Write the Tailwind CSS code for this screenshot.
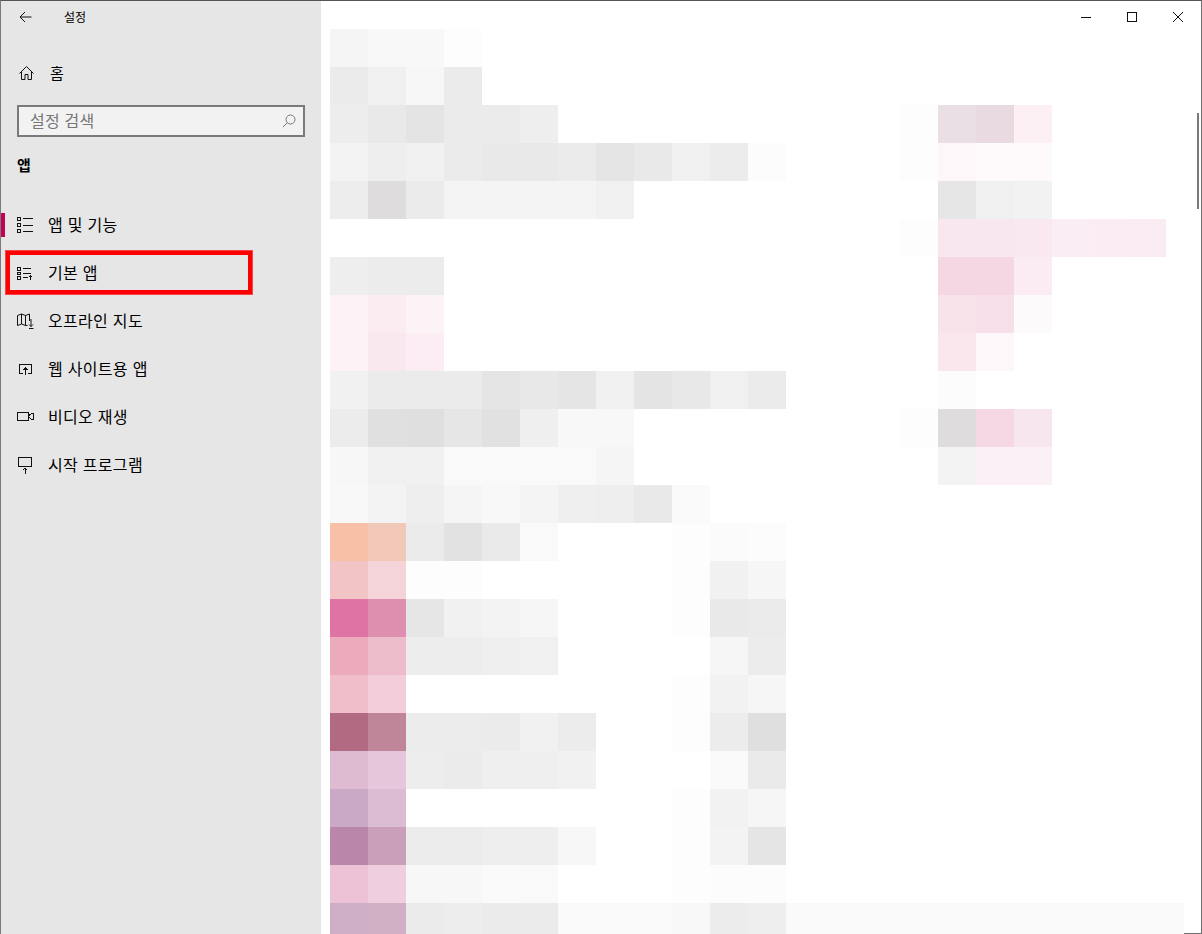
<!DOCTYPE html>
<html lang="ko">
<head>
<meta charset="utf-8">
<title>설정</title>
<script src="https://cdn.jsdelivr.net/npm/@tailwindcss/browser@4"></script>
</head>
<body class="bg-white">
<div class="relative w-[1202px] h-[934px] overflow-hidden flex border-t border-t-[#555555] border-l border-l-[#7a7a7a] border-r border-r-[#707070] font-['Noto_Sans_CJK_KR','Noto_Sans',sans-serif] text-black">

  <aside class="w-[320px] shrink-0 bg-[#e6e6e6] flex flex-col">
    <div class="h-[32px] flex items-center">
      <div class="w-[63px] pl-[18px] flex">
        <svg width="13" height="12" viewBox="0 0 13 12" fill="none" stroke="#111" stroke-width="1"><path d="M12.5 6H1M6 1L1 6l5 5"/></svg>
      </div>
      <span class="text-[12px] leading-none">설정</span>
    </div>
    <div class="h-[48px] mt-[16px] flex items-center">
      <div class="w-[49px] pl-[18px] flex">
        <svg width="15" height="16" viewBox="0 0 15 16" fill="none" stroke="#111" stroke-width="1"><path d="M.5 8.5l7-7 7 7M2.5 7v7.5h3.5V9.5h3v5h3.5V7"/></svg>
      </div>
      <span class="text-[15px] leading-none pb-[2px]">홈</span>
    </div>
    <div class="mt-[8px] mx-[16px] h-[32px] border-2 border-[#7a7a7a] bg-[#f2f2f2] flex items-center justify-between pl-[11px] pr-[7px]">
      <span class="text-[16px] tracking-[0.2px] leading-none text-[#767676] pb-[2px]">설정 검색</span>
      <svg width="14" height="14" viewBox="0 0 14 14" fill="none" stroke="#767676" stroke-width="1"><circle cx="8.5" cy="5.5" r="4.5"/><path d="M5.2 8.8L1 13"/></svg>
    </div>
    <div class="h-[64px] pl-[16px] pt-[17px]">
      <h2 class="text-[15px] leading-[22px] font-bold">앱</h2>
    </div>
    <nav class="flex flex-col">
      <a class="relative h-[48px] flex items-center text-[16px] tracking-[0.3px] leading-none">
        <span class="absolute left-0 top-[12px] w-[4px] h-[24px] bg-[#c30052]"></span>
        <span class="w-[47px] pl-[16px] flex">
          <svg width="16" height="16" viewBox="0 0 16 16" fill="none" stroke="#111" stroke-width="1" shape-rendering="crispEdges"><path d="M.5.5h3v3h-3zM.5 6.5h3v3h-3zM.5 12.5h3v3h-3zM6 1.5h9.5M6 8h9.5M6 14.5h9.5"/></svg>
        </span>
        <span class="pb-[2px]">앱 및 기능</span>
      </a>
      <a class="h-[48px] flex items-center text-[16px] tracking-[0.3px] leading-none">
        <span class="w-[47px] pl-[16px] flex">
          <svg width="16" height="16" viewBox="0 0 16 16" fill="none" stroke="#111" stroke-width="1" shape-rendering="crispEdges"><path d="M.5 2.5h2.5v2.5H.5zM.5 7h2.5v2.5H.5zM.5 11.5h2.5v2.5H.5zM6 3.5h8M6 8h8M6 12.5h5M13.5 14.5V10M12 11.5h3"/></svg>
        </span>
        <span class="pb-[2px]">기본 앱</span>
      </a>
      <a class="h-[48px] flex items-center text-[16px] tracking-[0.3px] leading-none">
        <span class="w-[47px] pl-[16px] flex">
          <svg width="17" height="16" viewBox="0 0 17 16" fill="none" stroke="#111" stroke-width="1"><path d="M.5 2.5l4-1.5 4 1.5 4-1.5v7M.5 2.5v10l4-1.5 4 1.5h2M4.5 1v10M8.5 2.5v10M14 6v7.5M12 11.5l2 2 2-2M12 15.5h4.5"/></svg>
        </span>
        <span class="pb-[2px]">오프라인 지도</span>
      </a>
      <a class="h-[48px] flex items-center text-[16px] tracking-[0.3px] leading-none">
        <span class="w-[47px] pl-[16px] flex">
          <svg width="16" height="16" viewBox="0 0 16 16" fill="none" stroke="#111" stroke-width="1" shape-rendering="crispEdges"><path d="M6 12.5H2.5v-9h12v9H11M8.5 14V7M6.5 9l2-2 2 2"/></svg>
        </span>
        <span class="pb-[2px]">웹 사이트용 앱</span>
      </a>
      <a class="h-[48px] flex items-center text-[16px] tracking-[0.3px] leading-none">
        <span class="w-[47px] pl-[16px] flex">
          <svg width="17" height="16" viewBox="0 0 17 16" fill="none" stroke="#111" stroke-width="1" shape-rendering="crispEdges"><path d="M.5 3.5h11v8H.5zM11.5 7l3-2.5h1.5v6h-1.5l-3-2.5"/></svg>
        </span>
        <span class="pb-[2px]">비디오 재생</span>
      </a>
      <a class="h-[48px] flex items-center text-[16px] tracking-[0.3px] leading-none">
        <span class="w-[47px] pl-[16px] flex">
          <svg width="16" height="17" viewBox="0 0 16 17" fill="none" stroke="#111" stroke-width="1" shape-rendering="crispEdges"><path d="M1.5.5h13v9h-13zM8 16.5V11M6 13l2-2 2 2"/></svg>
        </span>
        <span class="pb-[2px]">시작 프로그램</span>
      </a>
    </nav>
  </aside>

  <main class="flex-1 bg-white pl-[9px] pt-[28px]">
    <div class="grid grid-cols-[repeat(22,38px)_18px] auto-rows-[38px]">
      <!-- row 0 -->
      <i class="bg-[#f5f5f5]"></i><i class="bg-[#f8f8f8]"></i><i class="bg-[#f8f8f8]"></i><i class="bg-[#fdfdfd]"></i>
      <!-- row 1 -->
      <i class="col-start-1 bg-[#ebebeb]"></i><i class="bg-[#f0f0f0]"></i><i class="bg-[#f7f7f7]"></i><i class="bg-[#ebebeb]"></i>
      <!-- row 2 -->
      <i class="col-start-1 bg-[#ededed]"></i><i class="bg-[#e9e9e9]"></i><i class="bg-[#e4e4e4]"></i><i class="bg-[#ebebeb]"></i><i class="bg-[#ebebeb]"></i><i class="bg-[#eeeeee]"></i>
      <i class="col-start-16 bg-[#fdfdfd]"></i><i class="bg-[#e9dfe5]"></i><i class="bg-[#e9d9e0]"></i><i class="bg-[#fcf0f4]"></i>
      <!-- row 3 -->
      <i class="col-start-1 bg-[#f3f3f3]"></i><i class="bg-[#eeeeee]"></i><i class="bg-[#f1f1f1]"></i><i class="bg-[#ebebeb]"></i><i class="bg-[#e9e9e9]"></i><i class="bg-[#e9e9e9]"></i><i class="bg-[#ebebeb]"></i><i class="bg-[#e5e5e5]"></i><i class="bg-[#e9e9e9]"></i><i class="bg-[#f0f0f0]"></i><i class="bg-[#ececec]"></i><i class="bg-[#fcfcfc]"></i>
      <i class="col-start-16 bg-[#fdfdfd]"></i><i class="bg-[#fdf7f9]"></i><i class="bg-[#fef9fa]"></i><i class="bg-[#fefafb]"></i>
      <!-- row 4 -->
      <i class="col-start-1 bg-[#ededed]"></i><i class="bg-[#dfdcdd]"></i><i class="bg-[#ebebeb]"></i><i class="bg-[#f4f4f4]"></i><i class="bg-[#f4f4f4]"></i><i class="bg-[#f4f4f4]"></i><i class="bg-[#f4f4f4]"></i><i class="bg-[#f0f0f0]"></i>
      <i class="col-start-17 bg-[#e6e6e6]"></i><i class="bg-[#f0f0f0]"></i><i class="bg-[#f2f2f2]"></i>
      <!-- row 5 -->
      <i class="col-start-16 bg-[#fdfdfd]"></i><i class="bg-[#f9e7ef]"></i><i class="bg-[#f9e7ef]"></i><i class="bg-[#f9e8f0]"></i><i class="bg-[#fbedf4]"></i><i class="bg-[#fbecf3]"></i><i class="bg-[#faeaf2]"></i>
      <!-- row 6 -->
      <i class="col-start-1 bg-[#eeeeee]"></i><i class="bg-[#ececec]"></i><i class="bg-[#ececec]"></i>
      <i class="col-start-17 bg-[#f5d6e3]"></i><i class="bg-[#f5d6e3]"></i><i class="bg-[#faecf2]"></i>
      <!-- row 7 -->
      <i class="col-start-1 bg-[#fdf2f6]"></i><i class="bg-[#fbecf2]"></i><i class="bg-[#fcf3f6]"></i>
      <i class="col-start-17 bg-[#f8e3eb]"></i><i class="bg-[#f6dfe8]"></i><i class="bg-[#fcfafb]"></i>
      <!-- row 8 -->
      <i class="col-start-1 bg-[#fdf3f7]"></i><i class="bg-[#f9e8ee]"></i><i class="bg-[#fbedf3]"></i>
      <i class="col-start-17 bg-[#f9e7ed]"></i><i class="bg-[#fdf7f9]"></i>
      <!-- row 9 -->
      <i class="col-start-1 bg-[#f1f1f1]"></i><i class="bg-[#ebebeb]"></i><i class="bg-[#ebebeb]"></i><i class="bg-[#ebebeb]"></i><i class="bg-[#e5e5e5]"></i><i class="bg-[#e8e8e8]"></i><i class="bg-[#e5e5e5]"></i><i class="bg-[#f0f0f0]"></i><i class="bg-[#e4e4e4]"></i><i class="bg-[#e8e8e8]"></i><i class="bg-[#f0f0f0]"></i><i class="bg-[#ebebeb]"></i>
      <i class="col-start-17 bg-[#fcfcfc]"></i>
      <!-- row 10 -->
      <i class="col-start-1 bg-[#ececec]"></i><i class="bg-[#e0e0e0]"></i><i class="bg-[#dfdfdf]"></i><i class="bg-[#e6e6e6]"></i><i class="bg-[#e1e1e1]"></i><i class="bg-[#efefef]"></i><i class="bg-[#f8f8f8]"></i><i class="bg-[#f8f8f8]"></i>
      <i class="col-start-16 bg-[#fdfdfd]"></i><i class="bg-[#dfdcde]"></i><i class="bg-[#f6d7e4]"></i><i class="bg-[#f8e6ee]"></i>
      <!-- row 11 -->
      <i class="col-start-1 bg-[#f7f7f7]"></i><i class="bg-[#f0f0f0]"></i><i class="bg-[#f1f1f1]"></i><i class="bg-[#f9f9f9]"></i><i class="bg-[#f9f9f9]"></i><i class="bg-[#f9f9f9]"></i><i class="bg-[#f9f9f9]"></i><i class="bg-[#f5f5f5]"></i>
      <i class="col-start-17 bg-[#f3f3f3]"></i><i class="bg-[#fbf0f5]"></i><i class="bg-[#fbf0f5]"></i>
      <!-- row 12 -->
      <i class="col-start-1 bg-[#f8f8f8]"></i><i class="bg-[#f3f3f3]"></i><i class="bg-[#eeeeee]"></i><i class="bg-[#f5f5f5]"></i><i class="bg-[#f8f8f8]"></i><i class="bg-[#f4f4f4]"></i><i class="bg-[#efefef]"></i><i class="bg-[#eeeeee]"></i><i class="bg-[#e9e9e9]"></i><i class="bg-[#fafafa]"></i>
      <!-- row 13 -->
      <i class="col-start-1 bg-[#f8c1a7]"></i><i class="bg-[#f2c8b8]"></i><i class="bg-[#ebebeb]"></i><i class="bg-[#e2e2e2]"></i><i class="bg-[#eaeaea]"></i><i class="bg-[#f9f9f9]"></i>
      <i class="col-start-10 bg-[#fdfdfd]"></i><i class="bg-[#fbfbfb]"></i><i class="bg-[#fcfcfc]"></i>
      <!-- row 14 -->
      <i class="col-start-1 bg-[#f2c4c6]"></i><i class="bg-[#f5d4d9]"></i><i class="bg-[#fdfdfd]"></i><i class="bg-[#fdfdfd]"></i>
      <i class="col-start-10 bg-[#fdfdfd]"></i><i class="bg-[#f1f1f1]"></i><i class="bg-[#f6f6f6]"></i>
      <!-- row 15 -->
      <i class="col-start-1 bg-[#df73a3]"></i><i class="bg-[#de8eaf]"></i><i class="bg-[#e6e6e6]"></i><i class="bg-[#f1f1f1]"></i><i class="bg-[#f3f3f3]"></i><i class="bg-[#f6f6f6]"></i>
      <i class="col-start-10 bg-[#fdfdfd]"></i><i class="bg-[#e9e9e9]"></i><i class="bg-[#ebebeb]"></i>
      <!-- row 16 -->
      <i class="col-start-1 bg-[#ecaabd]"></i><i class="bg-[#edbcca]"></i><i class="bg-[#ededed]"></i><i class="bg-[#ededed]"></i><i class="bg-[#efefef]"></i><i class="bg-[#f0f0f0]"></i>
      <i class="col-start-11 bg-[#f6f6f6]"></i><i class="bg-[#ececec]"></i>
      <!-- row 17 -->
      <i class="col-start-1 bg-[#f0bdcb]"></i><i class="bg-[#f3cdda]"></i>
      <i class="col-start-10 bg-[#fdfdfd]"></i><i class="bg-[#f2f2f2]"></i><i class="bg-[#f6f6f6]"></i>
      <!-- row 18 -->
      <i class="col-start-1 bg-[#b26a82]"></i><i class="bg-[#bf8599]"></i><i class="bg-[#ececec]"></i><i class="bg-[#ececec]"></i><i class="bg-[#ebebeb]"></i><i class="bg-[#f1f1f1]"></i><i class="bg-[#ececec]"></i>
      <i class="col-start-10 bg-[#fdfdfd]"></i><i class="bg-[#ececec]"></i><i class="bg-[#dfdfdf]"></i>
      <!-- row 19 -->
      <i class="col-start-1 bg-[#dfbbd2]"></i><i class="bg-[#e5c6da]"></i><i class="bg-[#ededed]"></i><i class="bg-[#ebebeb]"></i><i class="bg-[#efefef]"></i><i class="bg-[#efefef]"></i><i class="bg-[#f1f1f1]"></i>
      <i class="col-start-11 bg-[#fafafa]"></i><i class="bg-[#eaeaea]"></i>
      <!-- row 20 -->
      <i class="col-start-1 bg-[#caa9c7]"></i><i class="bg-[#dbbcd2]"></i>
      <i class="col-start-10 bg-[#fdfdfd]"></i><i class="bg-[#f2f2f2]"></i><i class="bg-[#f6f6f6]"></i>
      <!-- row 21 -->
      <i class="col-start-1 bg-[#ba86a9]"></i><i class="bg-[#c99fb9]"></i><i class="bg-[#ececec]"></i><i class="bg-[#ececec]"></i><i class="bg-[#eeeeee]"></i><i class="bg-[#eeeeee]"></i><i class="bg-[#f7f7f7]"></i>
      <i class="col-start-10 bg-[#fdfdfd]"></i><i class="bg-[#f3f3f3]"></i><i class="bg-[#e5e5e5]"></i>
      <!-- row 22 -->
      <i class="col-start-1 bg-[#edc1d6]"></i><i class="bg-[#efcfdf]"></i><i class="bg-[#f7f7f7]"></i><i class="bg-[#f7f7f7]"></i><i class="bg-[#fafafa]"></i><i class="bg-[#f9f9f9]"></i>
      <i class="col-start-10 bg-[#fdfdfd]"></i><i class="bg-[#fcfcfc]"></i><i class="bg-[#fcfcfc]"></i>
      <!-- row 23 -->
      <i class="col-start-1 bg-[#ceadc6]"></i><i class="bg-[#d1b0c6]"></i><i class="bg-[#ebebeb]"></i><i class="bg-[#ededed]"></i><i class="bg-[#ebebeb]"></i><i class="bg-[#ebebeb]"></i><i class="bg-[#fafafa]"></i><i class="bg-[#fafafa]"></i><i class="bg-[#fafafa]"></i><i class="bg-[#f8f8f8]"></i><i class="bg-[#ececec]"></i><i class="bg-[#eeeeee]"></i><i class="col-span-11 bg-[#fafafa]"></i>
    </div>
  </main>

  <!-- caption buttons -->
  <div class="absolute top-0 right-0 flex h-[32px]">
    <div class="w-[46px] flex items-center justify-center">
      <svg width="10" height="10" viewBox="0 0 10 10" stroke="#111" stroke-width="1" fill="none" shape-rendering="crispEdges"><path d="M0 5.5h10"/></svg>
    </div>
    <div class="w-[46px] flex items-center justify-center">
      <svg width="10" height="10" viewBox="0 0 10 10" stroke="#111" stroke-width="1" fill="none" shape-rendering="crispEdges"><path d="M.5.5h9v9h-9z"/></svg>
    </div>
    <div class="w-[46px] flex items-center justify-center">
      <svg width="10" height="10" viewBox="0 0 10 10" stroke="#111" stroke-width="1" fill="none"><path d="M0 0l10 10M10 0L0 10"/></svg>
    </div>
  </div>

  <!-- scrollbar thumb -->
  <div class="absolute left-[1196px] top-[112px] w-[2px] h-[96px] bg-[#7a7a7a]"></div>

  <!-- red annotation -->
  <div class="absolute left-[5px] top-[250px] w-[246px] h-[43px] border-[4px] border-[#ff0000] outline-1 outline-solid outline-[#ff0000]/70"></div>

  <!-- window bottom edge -->
  <div class="absolute right-0 bottom-0 w-[17px] h-px bg-[#707070]"></div>
</div>
</body>
</html>
